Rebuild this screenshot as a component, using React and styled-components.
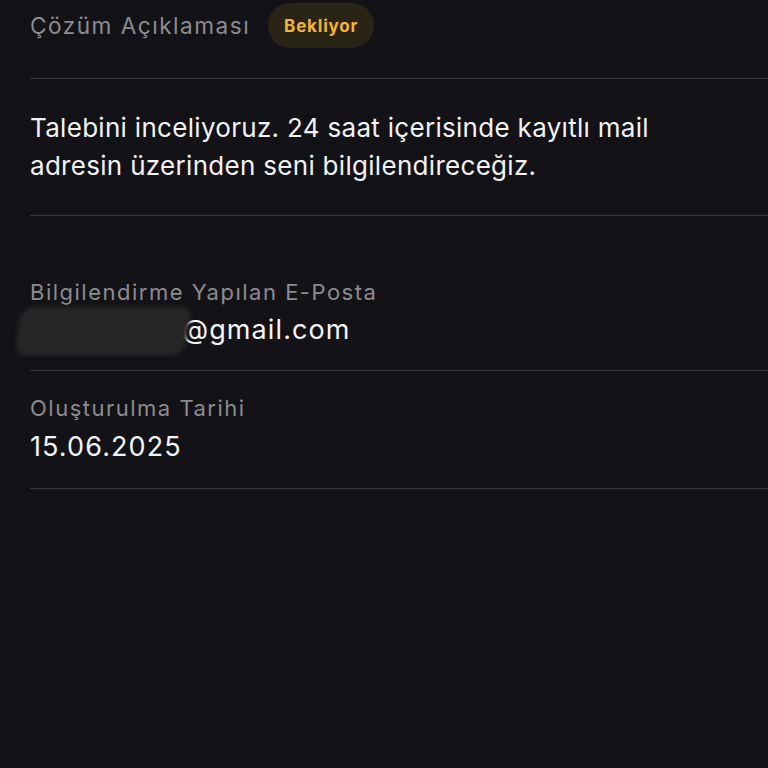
import React from "react";
import styled, { createGlobalStyle } from "styled-components";

const Global = createGlobalStyle`
  html, body { margin: 0; padding: 0; background: #131317; }
  body { font-family: Inter, "Noto Sans", sans-serif; }
`;

const Page = styled.div`
  min-height: 768px;
  background: #131317;
  padding-left: 30px;
  box-sizing: border-box;
`;

const HeaderRow = styled.div`
  display: flex;
  align-items: center;
  gap: 18px;
  height: 51px;
  padding-bottom: 27px;
  border-bottom: 1px solid #36363a;
`;

const Muted = styled.div`
  color: #8b8b90;
  font-size: ${(p) => p.size || "22px"};
  line-height: 26px;
  letter-spacing: 1.5px;
`;

const Badge = styled.span`
  display: inline-flex;
  align-items: center;
  justify-content: center;
  height: 45px;
  padding: 0 16px;
  border-radius: 23px;
  background: #2a2417;
  color: #f2b431;
  font-weight: 700;
  font-size: 17px;
  letter-spacing: 0.8px;
`;

const Section = styled.div`
  border-bottom: 1px solid #36363a;
  padding: ${(p) => p.pad};
`;

const Paragraph = styled.p`
  margin: 0;
  color: #f2f2f4;
  font-size: 26px;
  line-height: 38px;
  letter-spacing: 0.3px;
  max-width: 650px;
`;

const Value = styled.div`
  color: #f4f4f6;
  font-size: 27px;
  line-height: 34px;
  letter-spacing: 1.1px;
  margin-top: ${(p) => p.gap || "8px"};
`;

const Hidden = styled.span`
  position: relative;
  display: inline-block;
  width: 152px;
  color: #f4f4f6;
  overflow: visible;
`;

const Smudge = styled.span`
  position: absolute;
  left: -12px;
  right: -6px;
  top: -6px;
  bottom: -8px;
  background: #262628;
  border-radius: 12px;
  filter: blur(2px);
  transform: skewX(-10deg);
`;

export default function App() {
  return (
    <>
      <Global />
      <Page>
        <HeaderRow>
          <Muted size="22.6px">Çözüm Açıklaması</Muted>
          <Badge>Bekliyor</Badge>
        </HeaderRow>
        <Section pad="30px 0 30px">
          <Paragraph>
            Talebini inceliyoruz. 24 saat içerisinde kayıtlı mail adresin üzerinden seni bilgilendireceğiz.
          </Paragraph>
        </Section>
        <Section pad="63px 0 23px">
          <Muted>Bilgilendirme Yapılan E-Posta</Muted>
          <Value gap="8px">
            <Hidden>
              cxxxxkxxxx
              <Smudge />
            </Hidden>
            @gmail.com
          </Value>
        </Section>
        <Section pad="24px 0 24px">
          <Muted>Oluşturulma Tarihi</Muted>
          <Value gap="9px">15.06.2025</Value>
        </Section>
      </Page>
    </>
  );
}
